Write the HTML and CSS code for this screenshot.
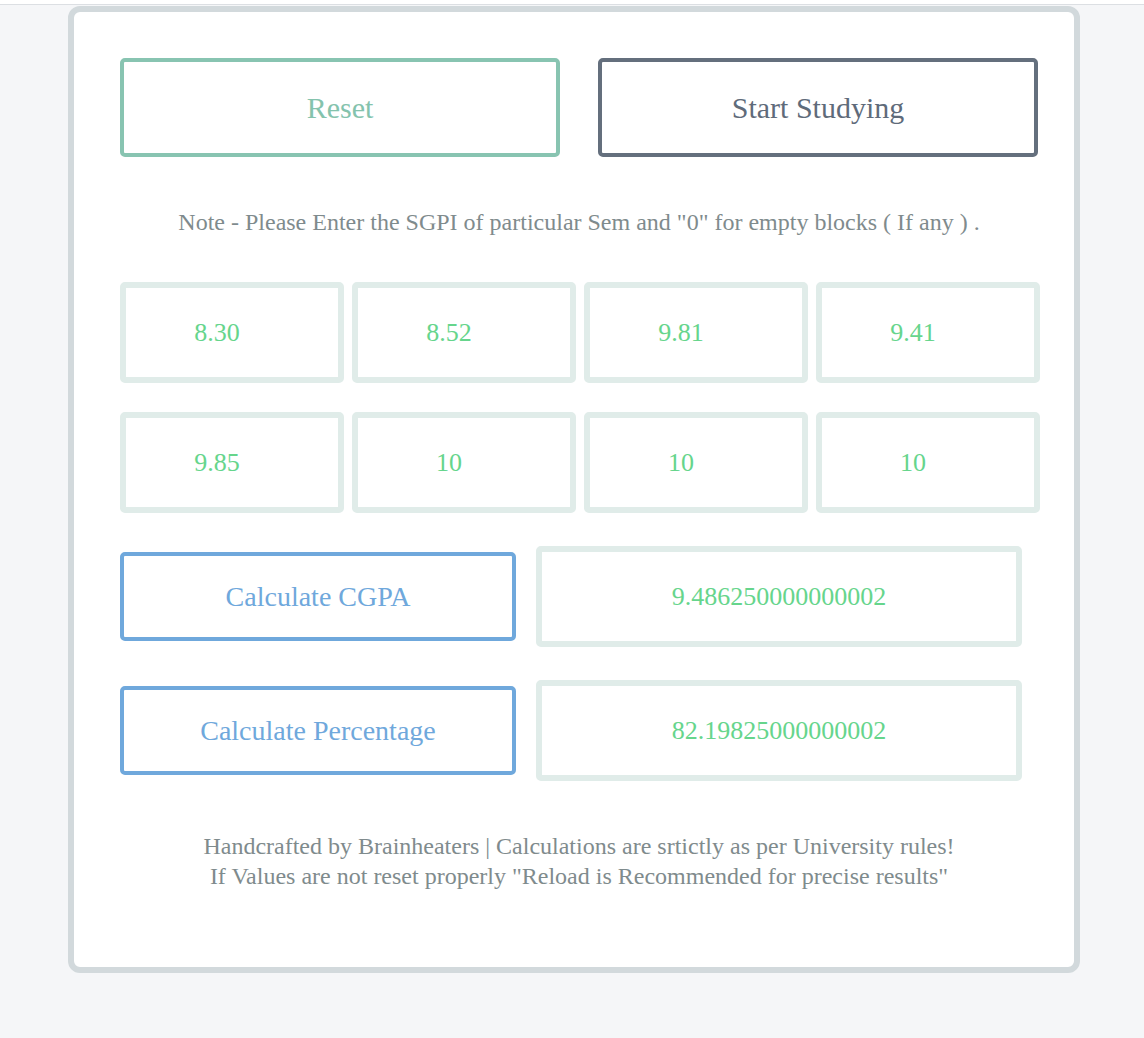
FILE: index.html
```html
<!DOCTYPE html>
<html lang="en">
<head>
<meta charset="utf-8">
<title>CGPA Calculator</title>
<link rel="stylesheet" href="styles.css">
</head>
<body>
<div class="topbar"></div>
<main class="card">
  <div class="actions">
    <button class="btn btn-reset">Reset</button>
    <button class="btn btn-study">Start Studying</button>
  </div>
  <p class="note">Note - Please Enter the SGPI of particular Sem and "0" for empty blocks ( If any ) .</p>
  <div class="sems">
    <div class="sem">8.30</div>
    <div class="sem">8.52</div>
    <div class="sem">9.81</div>
    <div class="sem">9.41</div>
    <div class="sem">9.85</div>
    <div class="sem">10</div>
    <div class="sem">10</div>
    <div class="sem">10</div>
  </div>
  <div class="calc-row">
    <button class="btn btn-calc">Calculate CGPA</button>
    <div class="result">9.486250000000002</div>
  </div>
  <div class="calc-row">
    <button class="btn btn-calc">Calculate Percentage</button>
    <div class="result">82.19825000000002</div>
  </div>
  <footer class="foot">
    <p>Handcrafted by Brainheaters | Calculations are srtictly as per University rules!</p>
    <p>If Values are not reset properly "Reload is Recommended for precise results"</p>
  </footer>
</main>
</body>
</html>
```

FILE: styles.css
```css
* { box-sizing: border-box; }

body {
  margin: 0;
  background: #f5f6f8;
  font-family: "Liberation Serif", "Times New Roman", serif;
}

.topbar {
  height: 5px;
  background: #ffffff;
  border-bottom: 1px solid #dcdfe3;
}

.card {
  width: 1012px;
  margin: 1px 0 0 68px;
  background: #ffffff;
  border: 6px solid #d2d9dc;
  border-radius: 12px;
  padding: 46px 34px 76px 46px;
}

.btn {
  font-family: inherit;
  background: #ffffff;
  border-radius: 5px;
  cursor: pointer;
  padding: 0;
}

.actions {
  display: flex;
  gap: 38px;
  width: 918px;
}

.btn-reset, .btn-study {
  flex: 1;
  height: 99px;
  border: 4px solid #88c4b1;
  color: #84c3ad;
  font-size: 30px;
}

.btn-study {
  border-color: #646f7d;
  color: #5f6b7a;
}

.note {
  margin: 50px 0 0;
  width: 918px;
  text-align: center;
  line-height: 30px;
  font-size: 24px;
  color: #7f8b8d;
}

.sems {
  margin-top: 45px;
  display: grid;
  grid-template-columns: repeat(4, 224px);
  column-gap: 8px;
  row-gap: 29px;
}

.sem {
  height: 101px;
  border: 6px solid #e0ece9;
  border-radius: 5px;
  display: flex;
  align-items: center;
  justify-content: center;
  padding-right: 30px;
  font-size: 26px;
  color: #66d58c;
}

.calc-row {
  margin-top: 33px;
  display: flex;
  align-items: center;
  gap: 20px;
}

.btn-calc {
  width: 396px;
  height: 89px;
  border: 4px solid #6fa8dc;
  color: #6fa8dc;
  font-size: 28px;
}

.result {
  width: 486px;
  height: 101px;
  border: 6px solid #e0ece9;
  border-radius: 5px;
  display: flex;
  align-items: center;
  justify-content: center;
  font-size: 26px;
  color: #66d58c;
}

.foot {
  margin-top: 50px;
  width: 918px;
  text-align: center;
  color: #7f8b8d;
  font-size: 24px;
  line-height: 30px;
}

.foot p { margin: 0; }
```
